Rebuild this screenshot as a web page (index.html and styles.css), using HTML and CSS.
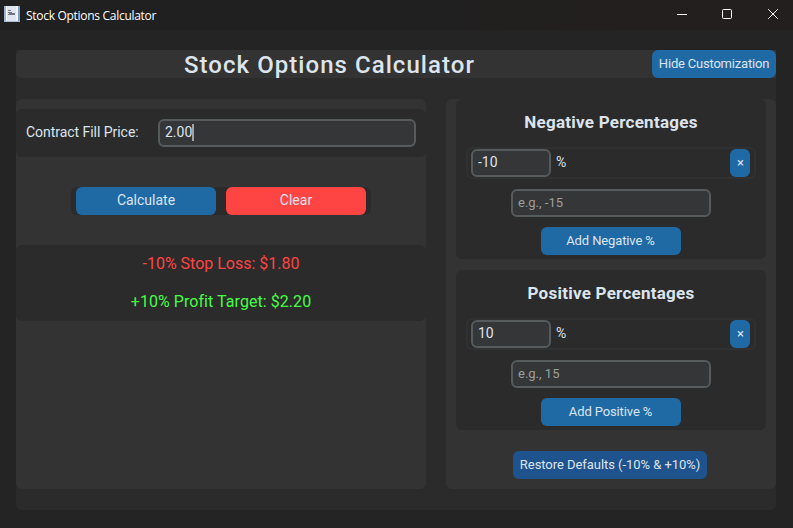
FILE: index.html
```html
<!DOCTYPE html>
<html lang="en">
<head>
<meta charset="utf-8">
<title>Stock Options Calculator</title>
<link rel="stylesheet" href="styles.css">
</head>
<body>
<header class="titlebar">
  <svg class="app-icon" width="16" height="16" viewBox="0 0 16 16" shape-rendering="crispEdges">
    <rect width="16" height="16" fill="#dfe5ef"/>
    <rect width="2" height="16" fill="#9db4d2"/>
    <rect x="14" width="2" height="16" fill="#7f9dc6"/>
    <rect x="2" width="1" height="16" fill="#f6f8fb"/>
    <rect x="12" width="2" height="16" fill="#f0f3f8"/>
    <path d="M4 4h3v1H4zM4 6h4v1H4zM5 7h6v1H5zM4 8h7v1H4z" fill="#707683"/>
    <path d="M0 15h16v1H0z" fill="#a9bbd4"/>
  </svg>
  <span class="window-title">Stock Options Calculator</span>
  <svg class="controls" width="102" height="12" viewBox="0 0 102 12" fill="none" stroke="#fff">
    <path d="M1 6.5h10"/>
    <rect x="46.5" y="1.5" width="9" height="9" rx="1"/>
    <path d="M92.2 1.2l9.6 9.6M101.8 1.2l-9.6 9.6"/>
  </svg>
</header>
<main class="app">
  <div class="heading">
    <h1>Stock Options Calculator</h1>
    <button class="btn small hide">Hide Customization</button>
  </div>
  <div class="columns">
    <section class="panel left">
      <div class="fill-row">
        <label for="price">Contract Fill Price:</label>
        <div class="price-field"><input id="price" class="entry" value="2.00"><i class="caret"></i></div>
      </div>
      <div class="actions">
        <button class="btn">Calculate</button>
        <button class="btn red">Clear</button>
      </div>
      <div class="results">
        <p class="loss">-10% Stop Loss: $1.80</p>
        <p class="profit">+10% Profit Target: $2.20</p>
      </div>
    </section>
    <section class="panel right">
      <div class="card">
        <h2>Negative Percentages</h2>
        <div class="pct-row"><input class="entry" value="-10"><span>%</span><button class="btn small remove">×</button></div>
        <input class="entry add-entry" placeholder="e.g., -15">
        <button class="btn small add">Add Negative %</button>
      </div>
      <div class="card">
        <h2>Positive Percentages</h2>
        <div class="pct-row"><input class="entry" value="10"><span>%</span><button class="btn small remove">×</button></div>
        <input class="entry add-entry" placeholder="e.g., 15">
        <button class="btn small add">Add Positive %</button>
      </div>
      <button class="btn small restore">Restore Defaults (-10% &amp; +10%)</button>
    </section>
  </div>
</main>
</body>
</html>
```

FILE: styles.css
```css
* { box-sizing: border-box; }
body {
  margin: 0;
  height: 528px;
  overflow: hidden;
  background: #242424;
  color: #dce4ee;
  font-family: Roboto, "Liberation Sans", sans-serif;
  font-size: 14px;
}
h1, h2, p { margin: 0; }
.titlebar {
  height: 30px;
  display: flex;
  align-items: center;
  padding: 0 15px 0 4px;
  background: linear-gradient(90deg, #202020 0%, #202020 50%, #231f1e 80%);
}
.app-icon { margin-top: -3px; }
.window-title {
  margin-left: 6px;
  color: #fff;
  font-family: "Open Sans", "Noto Sans", sans-serif;
  font-size: 12px;
  letter-spacing: -0.29px;
  white-space: nowrap;
}
.controls { margin-left: auto; margin-top: -2px; }
.app {
  width: 760px;
  height: 460px;
  margin: 20px 0 0 16px;
  background: #2b2b2b;
  border-radius: 0 0 6px 6px;
}
.heading {
  height: 28px;
  display: flex;
  background: #333;
  border-radius: 6px 0 0 6px;
}
h1 {
  flex: 1;
  padding-left: 168px;
  font-size: 24px;
  font-weight: 500;
  line-height: 30px;
  letter-spacing: 1.05px;
  white-space: nowrap;
}
.btn {
  width: 140px;
  height: 28px;
  padding: 0 0 2px;
  border: 0;
  border-radius: 6px;
  background: #1f6aa5;
  color: #dce4ee;
  font: 14px Roboto, "Liberation Sans", sans-serif;
  white-space: nowrap;
}
.small { font-size: 13px; }
.hide { width: 124px; letter-spacing: -0.2px; }
.red { background: #ff4444; }
.columns { display: flex; gap: 20px; margin-top: 21px; }
.panel { height: 390px; background: #333; border-radius: 6px; }
.left { width: 410px; padding-top: 10px; }
.right { width: 330px; padding: 0 10px; text-align: center; }
.fill-row {
  height: 48px;
  display: flex;
  align-items: center;
  padding: 0 10px;
  background: #2b2b2b;
  border-radius: 6px;
}
.fill-row label { width: 132px; padding-bottom: 2px; letter-spacing: -0.04px; }
.price-field { position: relative; width: 258px; height: 28px; }
.price-field .entry { width: 100%; }
.entry {
  display: block;
  width: 80px;
  height: 28px;
  padding: 0 5px 2px;
  border: 2px solid #565b5e;
  border-radius: 6px;
  background: #343638;
  color: #dce4ee;
  font: 14px Roboto, "Liberation Sans", sans-serif;
  outline: 0;
}
.entry::placeholder { color: #9e9e9e; opacity: 1; }
.caret {
  position: absolute;
  left: 34px;
  top: 5px;
  width: 2px;
  height: 17px;
  background: #a0a2a4;
}
.actions {
  width: 300px;
  height: 28px;
  display: flex;
  justify-content: center;
  gap: 10px;
  margin: 30px auto;
  background: #2b2b2b;
  border-radius: 6px;
}
.results {
  height: 76px;
  background: #2b2b2b;
  border-radius: 6px;
  font-size: 16px;
  line-height: 38px;
  text-align: center;
}
.loss { color: #ff4444; }
.profit { color: #44ff44; letter-spacing: 0.06px; }
.card {
  height: 160px;
  margin-bottom: 11px;
  padding: 0 10px;
  background: #2b2b2b;
  border-radius: 6px;
}
h2 {
  height: 48px;
  font-size: 17px;
  font-weight: 700;
  line-height: 46px;
  letter-spacing: 0.25px;
}
.pct-row {
  height: 32px;
  display: flex;
  align-items: center;
  padding: 0 4px 0 3px;
  border: 2px solid #313131;
  border-radius: 6px;
}
.pct-row span { margin-left: 5px; padding-bottom: 2px; }
.remove { width: 20px; margin-left: auto; padding-left: 1px; }
.add-entry { width: 200px; margin: 10px auto; font-size: 13px; }
.add { padding-right: 1px; letter-spacing: -0.12px; }
.restore { display: block; width: 194px; margin: 21px auto 0 57px; background: #1f538d; letter-spacing: -0.05px; }
```
